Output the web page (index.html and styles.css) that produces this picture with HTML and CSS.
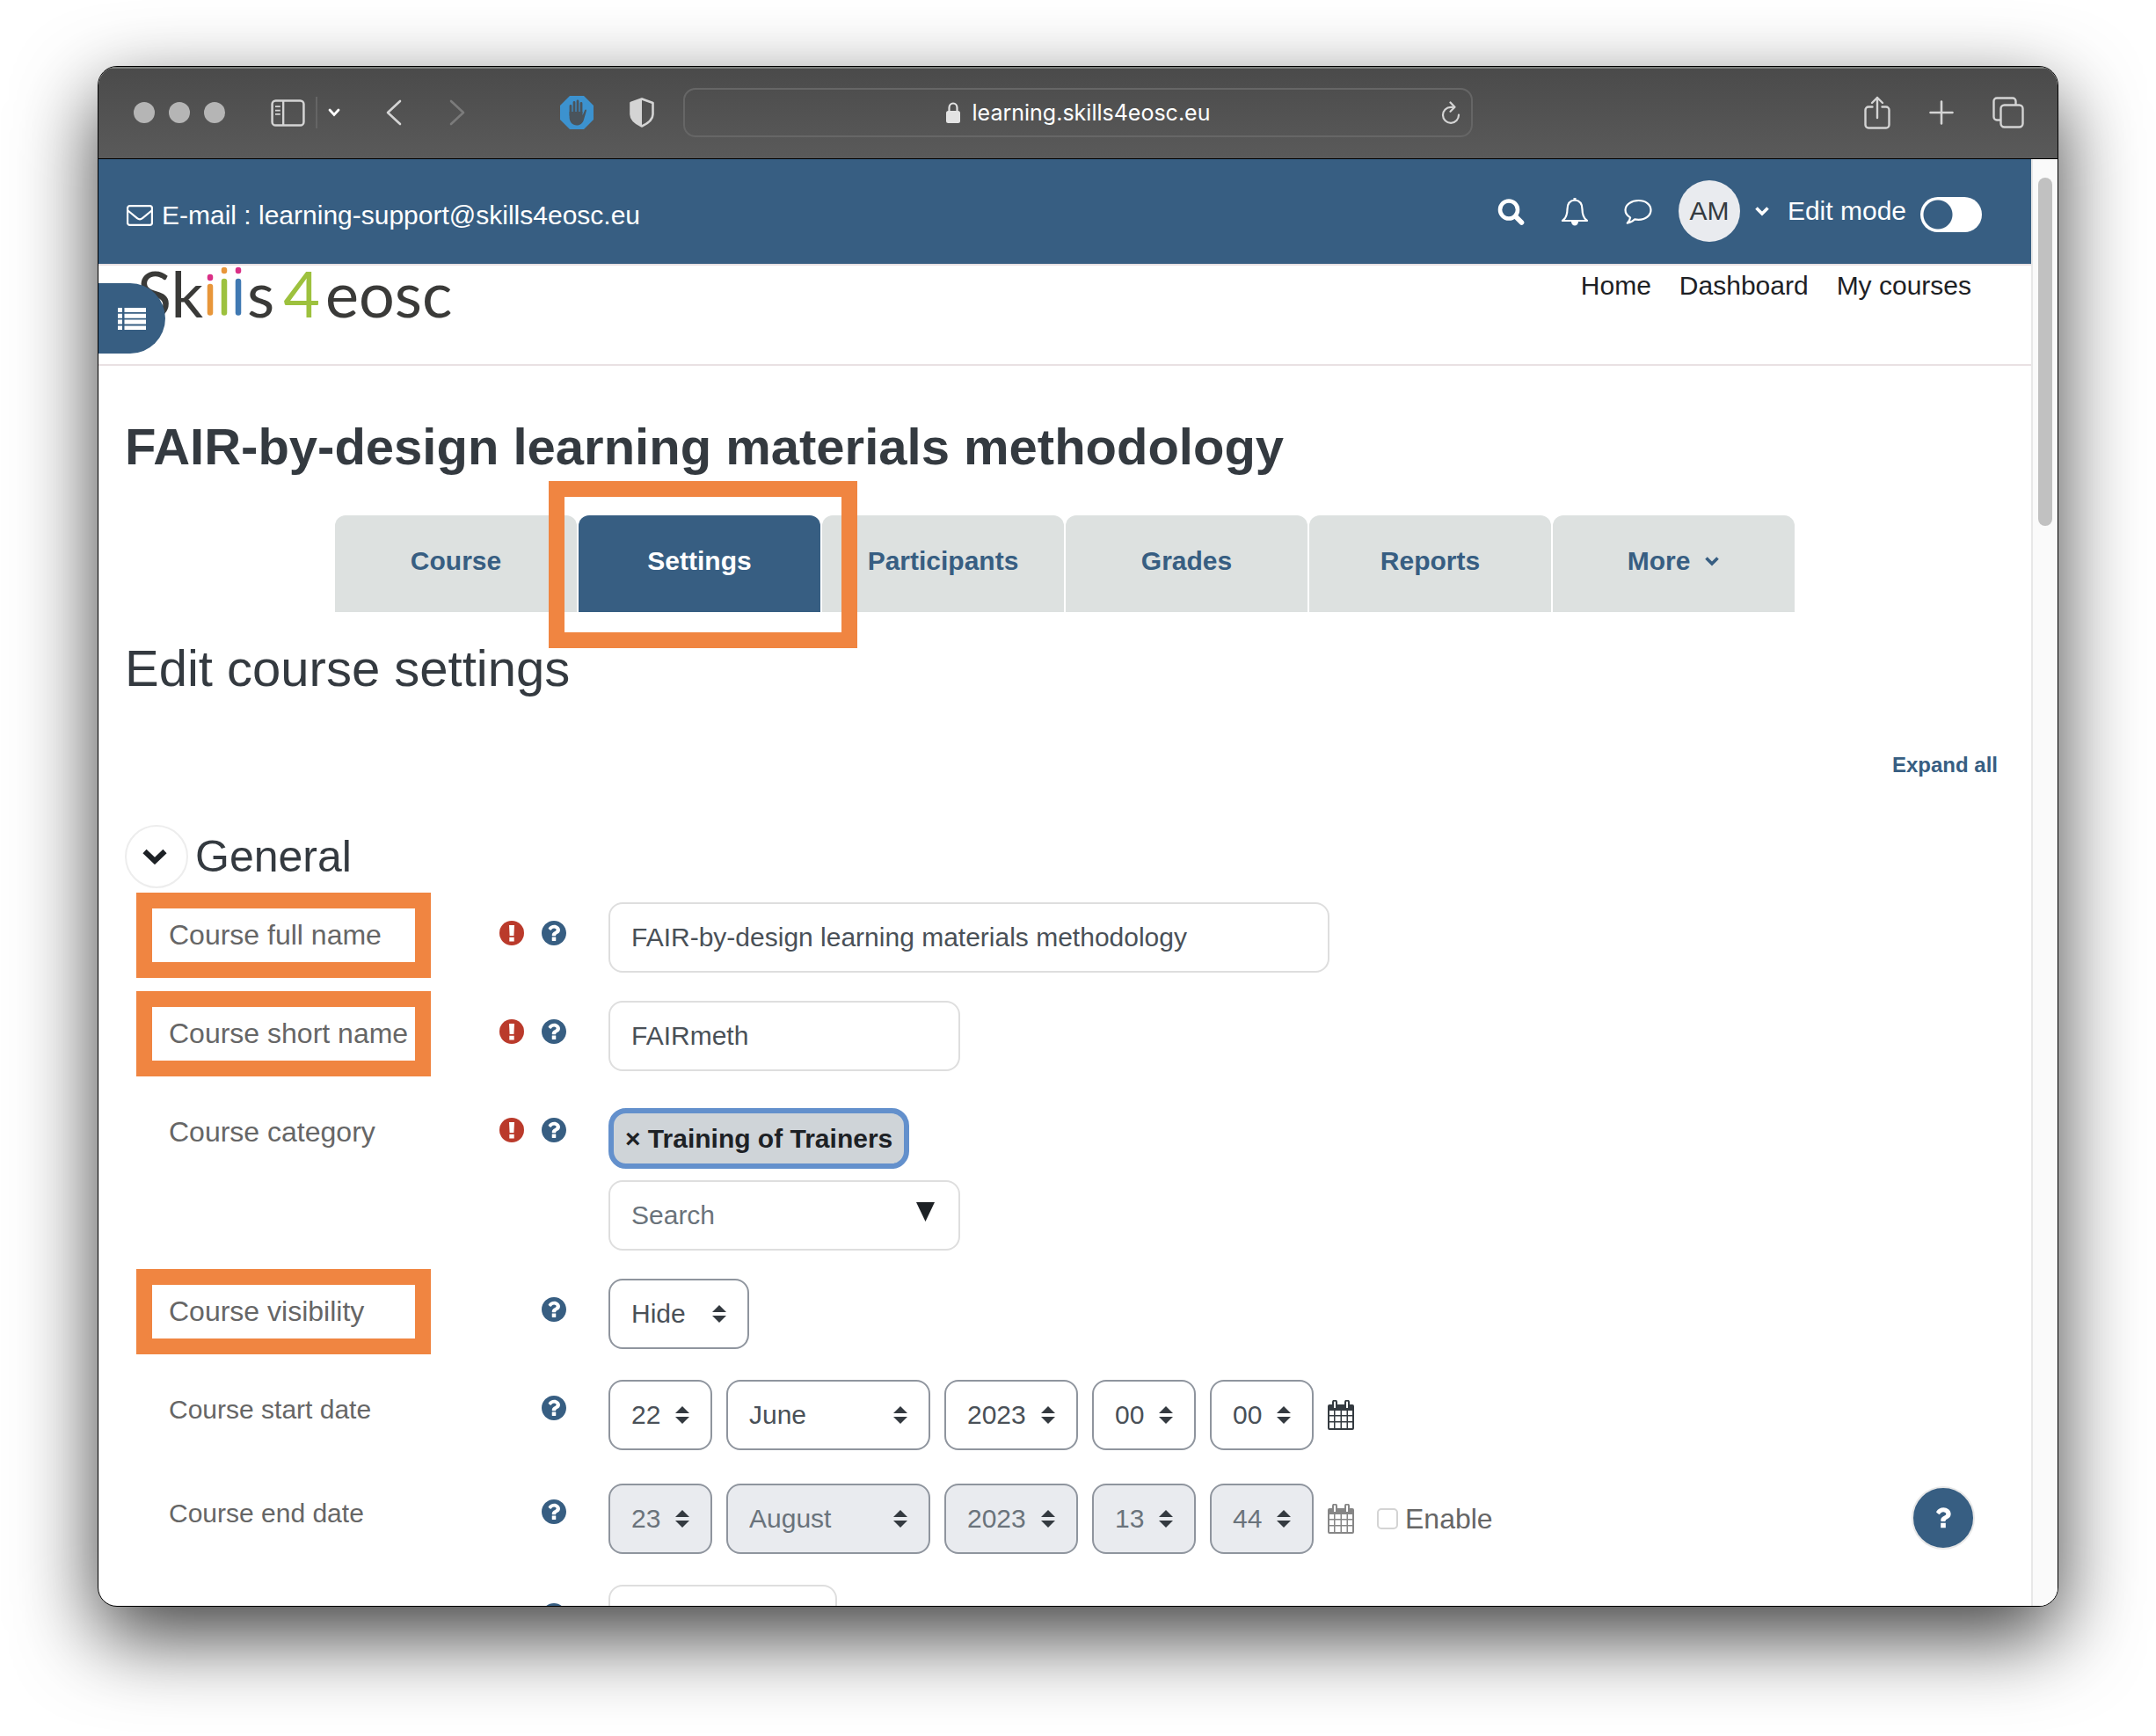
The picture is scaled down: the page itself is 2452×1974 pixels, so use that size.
FILE: index.html
```html
<!DOCTYPE html>
<html lang="en">
<head>
<meta charset="utf-8">
<meta name="viewport" content="width=device-width, initial-scale=1">
<title>Edit course settings</title>
<link rel="stylesheet" href="styles.css">
</head>
<body>
<svg class="sprite" aria-hidden="true">
  <symbol id="i-help" viewBox="8 8 496 496"><path fill-rule="evenodd" d="M504 256c0 136.997-111.043 248-248 248S8 392.997 8 256C8 119.083 119.043 8 256 8s248 111.083 248 248zM262.655 90c-54.497 0-89.255 22.957-116.549 63.758-3.536 5.286-2.353 12.415 2.715 16.258l34.699 26.31c5.205 3.947 12.621 3.008 16.665-2.122 17.864-22.658 30.113-35.797 57.303-35.797 20.429 0 45.698 13.148 45.698 32.958 0 14.976-12.363 22.667-32.534 33.976C247.128 238.528 216 254.941 216 296v4c0 6.627 5.373 12 12 12h56c6.627 0 12-5.373 12-12v-1.333c0-28.462 83.186-29.647 83.186-106.667 0-58.002-60.165-102-116.531-102zM216 344v64c0 5 3 8 8 8h64c5 0 8-3 8-8v-64c0-5-3-8-8-8h-64c-5 0-8 3-8 8z"/></symbol>
  <symbol id="i-question" viewBox="0 0 512 512"><path d="M262.655 90c-54.497 0-89.255 22.957-116.549 63.758-3.536 5.286-2.353 12.415 2.715 16.258l34.699 26.31c5.205 3.947 12.621 3.008 16.665-2.122 17.864-22.658 30.113-35.797 57.303-35.797 20.429 0 45.698 13.148 45.698 32.958 0 14.976-12.363 22.667-32.534 33.976C247.128 238.528 216 254.941 216 296v4c0 6.627 5.373 12 12 12h56c6.627 0 12-5.373 12-12v-1.333c0-28.462 83.186-29.647 83.186-106.667 0-58.002-60.165-102-116.531-102zM216 336h80v80h-80z"/></symbol>
  <symbol id="i-required" viewBox="0 0 28 28"><circle cx="14" cy="14" r="14"/><path fill="#fff" d="M11 5h6l-.6 12h-4.8zM11.3 18.8h5.4v4.8h-5.4z"/></symbol>
  <symbol id="i-calendar" viewBox="0 0 30 34"><path fill-rule="evenodd" d="M2 5h3V2.500a2.500 2.500 0 0 1 6 0V5h8V2.500a2.500 2.500 0 0 1 6 0V5h3a2 2 0 0 1 2 2v25a2 2 0 0 1-2 2H2a2 2 0 0 1-2-2V7a2 2 0 0 1 2-2zM7 2.500V9h2V2.500a1 1 0 0 0-2 0zM21 2.500V9h2V2.500a1 1 0 0 0-2 0zM2 12v5h5v-5zM8.500 12v5h6v-5zM16 12v5h5.500v-5zM23 12v5h5v-5zM2 18.500v5.500h5v-5.500zM8.500 18.500v5.500h6v-5.500zM16 18.500v5.500h5.500v-5.500zM23 18.500v5.500h5v-5.500zM2 25.500V32h5v-6.500zM8.500 25.500V32h6v-6.500zM16 25.500V32h5.500v-6.500zM23 25.500V32h5v-6.500z"/></symbol>
  <symbol id="i-chevron" viewBox="0 0 18 12"><path d="M2.500 2.500L9 9l6.500-6.500" fill="none" stroke="currentColor" stroke-width="3.600"/></symbol>
</svg>

<div class="window">
  <header class="toolbar">
    <div class="toolbar-left">
      <div class="controls">
        <div class="lights"><span></span><span></span><span></span></div>
        <div class="sidebar-tools">
          <button class="tool" aria-label="Show sidebar"><svg width="39" height="31" viewBox="0 0 40 32" fill="none" stroke="currentColor"><rect x="1.500" y="1.500" width="37" height="29" rx="4" stroke-width="2.600"/><path d="M14.500 2v28" stroke-width="2.400"/><path d="M5 8.500h6M5 13h6M5 17.500h6" stroke-width="1.800"/></svg></button>
          <span class="divider"></span>
          <button class="tool bright" aria-label="Tab groups"><svg width="14" height="10" viewBox="0 0 14 10" fill="none" stroke="currentColor" stroke-width="2.800" stroke-linecap="round"><path d="M2 2l5 5.500L12 2"/></svg></button>
        </div>
        <div class="history">
          <button class="tool" aria-label="Back"><svg width="18" height="30" viewBox="0 0 18 30" fill="none" stroke="currentColor" stroke-width="2.600" stroke-linecap="round" stroke-linejoin="round"><path d="M16 2L2 15l14 13"/></svg></button>
          <button class="tool faded" aria-label="Forward"><svg width="18" height="30" viewBox="0 0 18 30" fill="none" stroke="currentColor" stroke-width="2.600" stroke-linecap="round" stroke-linejoin="round"><path d="M2 2l14 13L2 28"/></svg></button>
        </div>
      </div>
      <div class="extensions">
        <button class="tool" aria-label="Ad blocker"><svg width="38" height="38" viewBox="0 0 38 38"><path d="M11 0h16l11 11v16L27 38H11L0 27V11z" fill="#3c92cf"/><path d="M12 22V11.500M16 19V7.500M20 19V6M24 19V8.500" stroke="#4a545c" stroke-width="2.800" stroke-linecap="round"/><path d="M10.600 18h14.800l.2 4 2.400-5.500c.6-1.500 2.200-1 1.900.5L27 27c-1.200 4-4 6.500-8 6.500-5 0-8.400-4-8.400-9z" fill="#4a545c"/></svg></button>
        <button class="tool" aria-label="Privacy report"><svg width="28" height="34" viewBox="0 0 28 34"><path d="M14 1.500L26.500 6v13c0 6-6 10.500-12.500 13.500C7.500 29.500 1.500 25 1.500 19V6z" fill="none" stroke="currentColor" stroke-width="2.600" stroke-linejoin="round"/><path d="M14 1.500L1.500 6v13c0 6 6 10.500 12.500 13.500z" fill="currentColor"/></svg></button>
      </div>
    </div>
    <div class="address">
      <span class="site"><svg width="16" height="24" viewBox="0 0 16 24"><rect y="10" width="16" height="14" rx="2.500" fill="currentColor"/><path d="M3.500 11V6.500a4.500 5 0 0 1 9 0V11" fill="none" stroke="currentColor" stroke-width="2.200"/></svg><span>learning.skills4eosc.eu</span></span>
      <button class="tool reload" aria-label="Reload"><svg width="22" height="26" viewBox="0 0 22 26" fill="none" stroke="currentColor" stroke-width="2.200" stroke-linecap="round" stroke-linejoin="round"><path d="M15 6.800H11A9 9 0 1 0 20 15.500M10.500 1.500l5 5.300-5 5"/></svg></button>
    </div>
    <div class="toolbar-right">
      <button class="tool" aria-label="Share"><svg width="30" height="38" viewBox="0 0 30 38" fill="none" stroke="currentColor" stroke-width="2.400" stroke-linecap="round" stroke-linejoin="round"><path d="M9.500 12.500H5A3.500 3.500 0 0 0 1.500 16v17A3.500 3.500 0 0 0 5 36.500h20a3.500 3.500 0 0 0 3.500-3.500V16a3.500 3.500 0 0 0-3.500-3.500h-4.500M15 25V2M9 8l6-6 6 6"/></svg></button>
      <button class="tool" aria-label="New tab"><svg width="28" height="28" viewBox="0 0 28 28" stroke="currentColor" stroke-width="2.600" stroke-linecap="round"><path d="M14 1.500v25M1.500 14h25"/></svg></button>
      <button class="tool" aria-label="Tab overview"><svg width="36" height="36" viewBox="0 0 36 36" fill="none" stroke="currentColor" stroke-width="2.400"><rect x="9.500" y="9.500" width="25" height="25" rx="4"/><path d="M9.500 26.500H5A3.500 3.500 0 0 1 1.500 23V5A3.500 3.500 0 0 1 5 1.500h18A3.500 3.500 0 0 1 26.500 5v4.500"/></svg></button>
    </div>
  </header>

  <div class="viewport">
    <div class="page">
      <div class="topbar">
        <a class="mail" href="#"><svg width="30" height="24" viewBox="0 0 30 24" fill="none" stroke="currentColor" stroke-width="2.200"><rect x="1.100" y="1.100" width="27.800" height="21.800" rx="2.500"/><path d="M1.500 6.500L12 15.200c2 1.600 4 1.600 6 0L28.500 6.500"/></svg><span>E-mail : learning-support@skills4eosc.eu</span></a>
        <div class="user-tools">
          <div class="user-icons">
            <button class="plain" aria-label="Search"><svg width="32" height="30" viewBox="0 0 32 30" fill="none" stroke="currentColor"><circle cx="13" cy="12.500" r="10" stroke-width="4.600"/><path d="M20.500 20l7 7" stroke-width="5.600" stroke-linecap="round"/></svg></button>
            <button class="plain" aria-label="Notifications"><svg width="32" height="34" viewBox="0 0 32 34"><path d="M16 3.500C9.500 4 7.500 9 7.500 14c0 7-2 10.500-5.500 13h28c-3.500-2.500-5.500-6-5.500-13 0-5-2-10-8.500-10.500z" fill="none" stroke="currentColor" stroke-width="2.200" stroke-linejoin="round"/><path d="M12 28a4 4.500 0 0 0 8 0zM14.500 1h3v3h-3z" fill="currentColor"/></svg></button>
            <button class="plain" aria-label="Messages"><svg width="32" height="30" viewBox="0 0 32 30" fill="none" stroke="currentColor" stroke-width="2.200" stroke-linejoin="round"><path d="M16.500 2C8.500 2 1.500 6.500 1.500 12.800c0 3.600 2.200 6.600 5.600 8.600-.4 2.700-1.600 4.600-3.400 6.300 3.600-.6 6.300-2 8.300-4.300 1.400.3 3 .4 4.500.4 8 0 14-4.700 14-11S24.500 2 16.500 2z"/></svg></button>
          </div>
          <button class="plain account"><span class="avatar">AM</span><svg width="18" height="12"><use href="#i-chevron"/></svg></button>
          <label class="edit-mode">Edit mode<input type="checkbox" role="switch"></label>
        </div>
      </div>

      <div class="brandbar">
        <a class="logo" href="#" aria-label="Skills4eosc"><span>Sk</span><svg width="42" height="60" viewBox="0 3 42 60" stroke-width="6.500" stroke-linecap="round"><g><path d="M5 27v29.500" stroke="#e8963a"/><path d="M5 16v1" stroke="#da2f86"/><path d="M21 21v35.500" stroke="#9dc13e"/><path d="M21 8v1" stroke="#e8963a"/><path d="M37 21v35.500" stroke="#4079b2"/><path d="M37 8v1" stroke="#da2f86"/></g></svg><span>s</span><span class="four">4</span><span>eosc</span></a>
        <nav class="links"><a href="#">Home</a><a href="#">Dashboard</a><a href="#">My courses</a></nav>
        <button class="drawer" aria-label="Open course index"><svg width="32" height="26" viewBox="0 0 32 26" fill="currentColor"><path d="M0 1h5v5H0zM7.500 1H32v5H7.500zM0 7.800h5v5H0zM7.500 7.800H32v5H7.500zM0 14.600h5v5H0zM7.500 14.600H32v5H7.500zM0 21.400h5v4.600H0zM7.500 21.400H32v4.600H7.500z"/></svg></button>
      </div>

      <main class="content">
        <h1>FAIR-by-design learning materials methodology</h1>
        <ul class="tabs">
          <li><a href="#">Course</a></li>
          <li class="marked"><a class="active" href="#">Settings</a></li>
          <li><a href="#">Participants</a></li>
          <li><a href="#">Grades</a></li>
          <li><a href="#">Reports</a></li>
          <li><a href="#">More <svg width="18" height="12"><use href="#i-chevron"/></svg></a></li>
        </ul>
        <h2>Edit course settings</h2>
        <a class="expand" href="#">Expand all</a>

        <form>
          <div class="section">
            <button type="button" class="collapse" aria-label="Collapse General"><svg width="28" height="18" viewBox="0 0 28 18" fill="none" stroke="currentColor" stroke-width="6"><path d="M2.500 3L14 14 25.500 3"/></svg></button>
            <h3>General</h3>
          </div>

          <div class="row">
            <div class="caption marked"><label for="fullname">Course full name</label><span class="hints"><svg class="req"><use href="#i-required"/></svg><svg class="help"><use href="#i-help"/></svg></span></div>
            <div><input class="field wide" id="fullname" type="text" value="FAIR-by-design learning materials methodology"></div>
          </div>
          <div class="row">
            <div class="caption marked"><label for="shortname">Course short name</label><span class="hints"><svg class="req"><use href="#i-required"/></svg><svg class="help"><use href="#i-help"/></svg></span></div>
            <div><input class="field" id="shortname" type="text" value="FAIRmeth"></div>
          </div>
          <div class="row">
            <div class="caption"><label for="category">Course category</label><span class="hints"><svg class="req"><use href="#i-required"/></svg><svg class="help"><use href="#i-help"/></svg></span></div>
            <div class="category">
              <button type="button" class="tag">× Training of Trainers</button>
              <div class="combo"><input class="field" id="category" type="text" placeholder="Search"><svg width="21" height="22" viewBox="0 0 21 22"><path d="M0 0h21L10.500 22z" fill="#1d2125"/></svg></div>
            </div>
          </div>
          <div class="row">
            <div class="caption marked"><label for="visible">Course visibility</label><span class="hints"><svg class="help"><use href="#i-help"/></svg></span></div>
            <div><select class="pick w-medium" id="visible"><option>Hide</option><option>Show</option></select></div>
          </div>
          <div class="row">
            <div class="caption date-caption"><label for="start-day">Course start date</label><span class="hints"><svg class="help"><use href="#i-help"/></svg></span></div>
            <div class="dates">
              <select class="pick" id="start-day"><option>22</option></select>
              <select class="pick w-month" aria-label="Month"><option>June</option></select>
              <select class="pick w-year" aria-label="Year"><option>2023</option></select>
              <select class="pick" aria-label="Hour"><option>00</option></select>
              <select class="pick" aria-label="Minute"><option>00</option></select>
              <svg class="calendar"><use href="#i-calendar"/></svg>
            </div>
          </div>
          <div class="row">
            <div class="caption date-caption"><label for="end-day">Course end date</label><span class="hints"><svg class="help"><use href="#i-help"/></svg></span></div>
            <div class="dates">
              <select class="pick" id="end-day" disabled><option>23</option></select>
              <select class="pick w-month" aria-label="Month" disabled><option>August</option></select>
              <select class="pick w-year" aria-label="Year" disabled><option>2023</option></select>
              <select class="pick" aria-label="Hour" disabled><option>13</option></select>
              <select class="pick" aria-label="Minute" disabled><option>44</option></select>
              <svg class="calendar off"><use href="#i-calendar"/></svg>
              <label class="enable"><input type="checkbox">Enable</label>
            </div>
          </div>
          <div class="row">
            <div class="caption"><span class="hints"><svg class="help"><use href="#i-help"/></svg></span></div>
            <div><input class="field short" type="text" aria-label="Course ID number"></div>
          </div>
        </form>
      </main>
      <button class="help-button" aria-label="Help"><svg width="36" height="36" fill="currentColor"><use href="#i-question"/></svg></button>
    </div>
    <div class="scrollbar"><span></span></div>
  </div>
</div>
</body>
</html>
```
FILE: styles.css
```css
:root {
  --blue: #375e82;
  --orange: #f08541;
  --line: #dedede;
  --ink: #343a40;
}

*, *::after { box-sizing: border-box; }

body {
  margin: 0;
  height: 100vh;
  padding: 75px 111px 147px;
  background: #fff;
  font-family: "Liberation Sans", Arial, sans-serif;
  font-size: 30px;
  line-height: 40px;
  color: #1d2125;
  overflow: hidden;
}

svg { display: block; flex: none; }
.sprite { position: absolute; width: 0; height: 0; }
a { color: inherit; text-decoration: none; }
button, input, select { font: inherit; color: inherit; margin: 0; }
button { border: 0; padding: 0; background: none; display: flex; align-items: center; }

.window {
  height: 100%;
  display: flex;
  flex-direction: column;
  border: 1px solid #000;
  border-radius: 22px;
  overflow: hidden;
  background: #fff;
  box-shadow: 0 34px 92px rgba(0, 0, 0, .75);
}

/* Browser toolbar */
.toolbar {
  flex: none;
  height: 105px;
  display: grid;
  grid-template-columns: 1fr minmax(0, 898px) 1fr;
  align-items: center;
  border-bottom: 1px solid #000;
  background: linear-gradient(#4a4a4a, #5a5a5a);
  box-shadow: inset 0 2px 0 #7d807d;
}
.toolbar-left { display: flex; justify-content: space-between; padding: 0 33px 0 40px; }
.controls, .extensions, .lights, .sidebar-tools, .history { display: flex; align-items: center; }
.controls { gap: 52px; }
.lights { gap: 16px; }
.lights span { width: 24px; height: 24px; border-radius: 50%; background: #b5b5b5; }
.sidebar-tools { gap: 12px; }
.divider { width: 2px; height: 36px; background: #656565; }
.history { gap: 54px; }
.extensions { gap: 41px; }
.tool { color: #d4d4d4; }
.tool.bright { color: #fff; }
.tool.faded { color: #7b7b7b; }
.address {
  height: 56px;
  display: grid;
  grid-template-columns: 1fr auto 1fr;
  align-items: center;
  padding: 0 12px;
  border: 2px solid #666;
  border-radius: 14px;
  color: #fff;
}
.site {
  grid-column: 2;
  display: flex;
  align-items: center;
  gap: 14px;
  font-family: Inter, "Liberation Sans", sans-serif;
  font-size: 25px;
}
.site svg { color: #e3e3e3; }
.reload { justify-self: end; }
.toolbar-right { display: flex; justify-content: flex-end; align-items: center; gap: 44px; padding-right: 38px; }

/* Page frame */
.viewport { flex: 1; min-height: 0; display: grid; grid-template-columns: 1fr 30px; }
.page { position: relative; min-width: 0; overflow: hidden; }
.scrollbar { border-left: 2px solid #e8e8e8; background: #fafafa; padding: 21px 6px; }
.scrollbar span { display: block; height: 396px; border-radius: 8px; background: #c1c1c1; }

/* Site header */
.topbar {
  min-height: 121px;
  display: flex;
  justify-content: space-between;
  align-items: center;
  padding: 0 56px 2px 32px;
  background: var(--blue);
  border-bottom: 2px solid #e9e1e3;
  color: #fff;
}
.plain { color: #fff; }
.mail { display: flex; align-items: center; gap: 10px; padding-top: 10px; }
.user-tools { display: flex; align-items: center; gap: 20px; }
.user-icons { display: flex; align-items: center; gap: 40px; margin-right: 10px; padding-top: 2px; }
.account { gap: 16px; }
.avatar {
  width: 70px;
  height: 70px;
  border-radius: 50%;
  background: #e9ebef;
  color: var(--ink);
  line-height: 70px;
  text-align: center;
}
.edit-mode { display: flex; align-items: center; gap: 16px; }
.edit-mode input {
  appearance: none;
  width: 70px;
  height: 40px;
  margin-top: 9px;
  border-radius: 20px;
  background: radial-gradient(circle at 20px 20px, var(--blue) 16px, #fff 17px);
}
.brandbar {
  position: relative;
  height: 114px;
  display: flex;
  justify-content: space-between;
  align-items: flex-start;
  padding: 0 68px 0 44px;
  border-bottom: 2px solid #e9e1e3;
}
.logo {
  display: flex;
  align-items: flex-start;
  font-family: Lato, sans-serif;
  font-size: 72px;
  line-height: 62px;
  color: #3a3a38;
}
.logo svg { margin: 0 5px 0 3px; }
.four { color: #9dc13e; margin: 0 6px 0 10px; }
.links { display: flex; gap: 32px; padding-top: 3px; }
.drawer {
  position: absolute;
  left: 0;
  top: 20px;
  width: 76px;
  height: 80px;
  padding-left: 22px;
  border-radius: 0 40px 40px 0;
  background: var(--blue);
  color: #fff;
}

/* Course page */
.content { padding: 57px 30px 0; }
h1, h2, h3 { margin: 0; font-weight: 400; color: var(--ink); }
h1, h2 { font-size: 58px; line-height: 70px; }
h1 { font-weight: 700; }
h2 { margin-top: 29px; }
h3 { font-size: 50px; line-height: 60px; }

.tabs {
  display: flex;
  justify-content: center;
  gap: 2px;
  margin: 43px 0 0;
  padding: 0;
  list-style: none;
  font-weight: 700;
}
.tabs li { position: relative; flex: 0 1 275px; }
.tabs a {
  display: flex;
  justify-content: center;
  align-items: center;
  gap: 16px;
  height: 110px;
  padding-bottom: 6px;
  border-radius: 12px 12px 0 0;
  background: #dde1e0;
  color: var(--blue);
}
.tabs .active { background: var(--blue); color: #fff; }
.tabs .marked::after {
  content: "";
  position: absolute;
  z-index: 1;
  inset: -39px -42px -41px -34px;
  border: 18px solid var(--orange);
  pointer-events: none;
}

.expand {
  display: block;
  width: max-content;
  margin: 57px 8px 50px auto;
  font-size: 24px;
  line-height: 36px;
  font-weight: 700;
  color: var(--blue);
}
.section { display: flex; align-items: center; gap: 8px; margin-bottom: 16px; }
.collapse {
  width: 72px;
  height: 72px;
  padding-left: 18px;
  border: 2px solid #ededed;
  border-radius: 50%;
}

/* Form rows */
.row {
  display: grid;
  grid-template-columns: 452px 1fr;
  gap: 48px;
  margin: 0 0 32px 50px;
}
.caption {
  position: relative;
  display: flex;
  justify-content: space-between;
  align-self: start;
  padding-top: 17px;
  font-size: 32px;
  color: #666;
}
.date-caption { font-size: 30px; }
.caption.marked::after {
  content: "";
  position: absolute;
  left: -37px;
  top: -11px;
  width: 335px;
  height: 97px;
  border: 18px solid var(--orange);
  pointer-events: none;
}
.hints { display: flex; align-items: center; gap: 20px; height: 36px; margin-left: auto; }
.hints svg { width: 28px; height: 28px; }
.req { fill: #ba3a2b; }
.help { fill: var(--blue); }

.field, .pick {
  display: block;
  height: 80px;
  padding: 0 24px;
  border: 2px solid var(--line);
  border-radius: 16px;
  background: #fff;
  color: #495057;
}
.field { width: 400px; }
.field.wide { width: 820px; max-width: 100%; }
.field.short { width: 260px; }
.field::placeholder { color: #6a737b; opacity: 1; }
.category { padding-top: 10px; }
.tag {
  margin-bottom: 13px;
  height: 69px;
  padding: 0 13px;
  border: 6px solid #6390cc;
  border-radius: 20px;
  background: #cfd4d8;
  font-weight: 700;
}
.combo { position: relative; width: 400px; }
.combo svg { position: absolute; right: 29px; top: 25px; }

.pick {
  appearance: none;
  width: 118px;
  border-color: #8f959e;
  background: #fff url("data:image/svg+xml,%3Csvg xmlns='http://www.w3.org/2000/svg' viewBox='0 0 16 20'%3E%3Cpath fill='%23343a40' d='M0 8L8 0l8 8zM0 12h16l-8 8z'/%3E%3C/svg%3E") no-repeat right 24px center / 16px 20px;
}
.pick:disabled { background-color: #e9ebef; color: #6a737b; opacity: 1; }
.w-medium { width: 160px; }
.w-month { width: 232px; }
.w-year { width: 152px; }
.dates { display: flex; align-items: center; gap: 16px; padding: 3px 0; }
.calendar { width: 30px; height: 34px; fill: var(--ink); }
.calendar.off { fill: #868686; }
.enable { display: flex; align-items: center; gap: 8px; margin-left: 10px; font-size: 32px; color: #666; }
.enable input {
  appearance: none;
  width: 24px;
  height: 24px;
  border: 2px solid #d4d4d4;
  border-radius: 5px;
  background: #fff;
}

.help-button {
  position: absolute;
  right: 64px;
  bottom: 64px;
  width: 72px;
  height: 72px;
  justify-content: center;
  border: 2px solid #e8e8e8;
  border-radius: 50%;
  background: var(--blue);
  color: #fff;
}
```
